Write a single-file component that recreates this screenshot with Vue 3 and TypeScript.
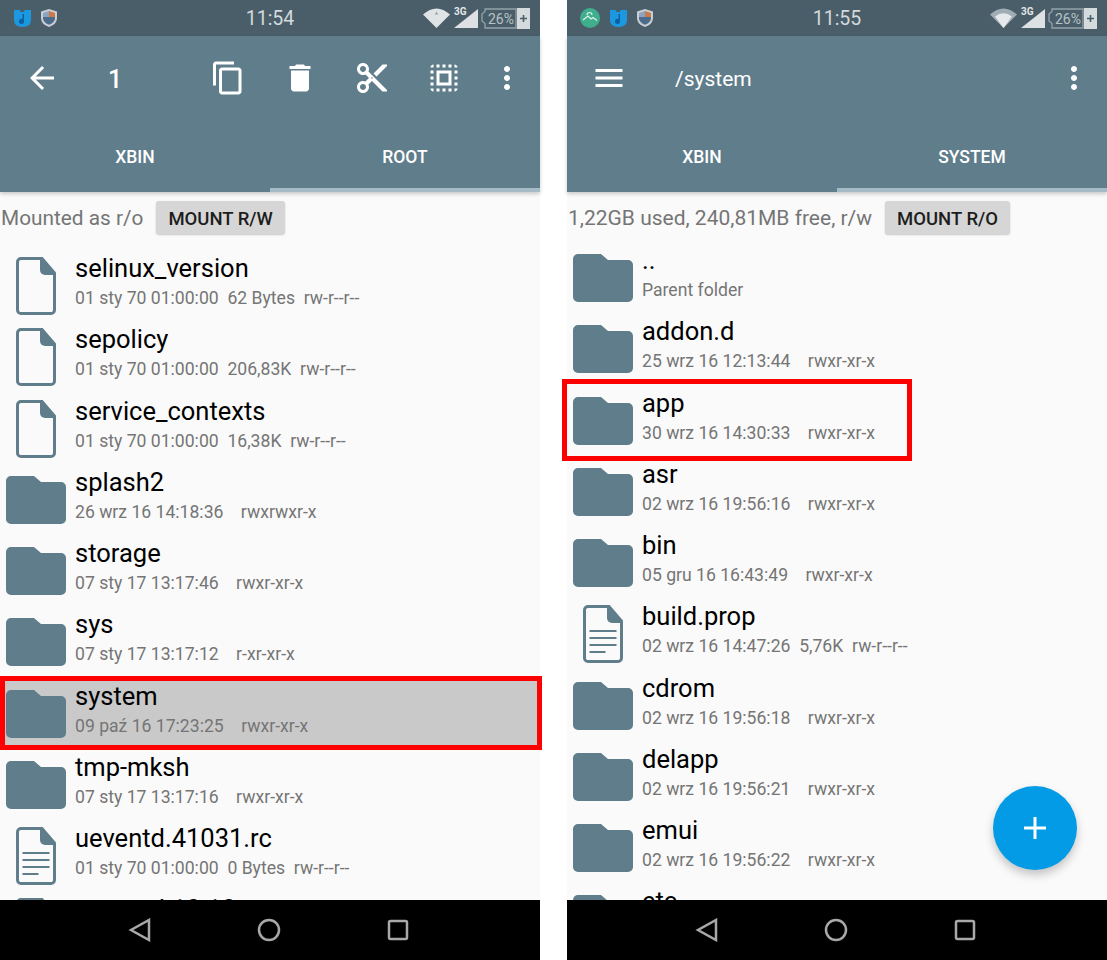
<script setup lang="ts">
type Kind = 'folder' | 'file' | 'text'

interface Entry {
  name: string
  kind: Kind
  meta: string
  selected?: boolean
}

interface Phone {
  id: string
  time: string
  title: string
  navPath: string
  actions: string[]
  tabs: [string, string]
  mountText: string
  mountLabel: string
  hasNotice: boolean
  fullWifi: boolean
  fab: boolean
  entries: Entry[]
}

/* Material icons, all drawn on the 24 unit grid */
const ICON = {
  back: 'M20 11H7.83l5.59-5.59L12 4l-8 8 8 8 1.41-1.41L7.83 13H20v-2z',
  menu: 'M3 18h18v-2H3v2zm0-5h18v-2H3v2zm0-7v2h18V6H3z',
  copy: 'M16 1H4c-1.1 0-2 .9-2 2v14h2V3h12V1zm3 4H8c-1.1 0-2 .9-2 2v14c0 1.1.9 2 2 2h11c1.1 0 2-.9 2-2V7c0-1.1-.9-2-2-2zm0 16H8V7h11v14z',
  trash: 'M6 19c0 1.1.9 2 2 2h8c1.1 0 2-.9 2-2V7H6v12zM19 4h-3.5l-1-1h-5l-1 1H5v2h14V4z',
  cut: 'M9.64 7.64c.23-.5.36-1.05.36-1.64 0-2.21-1.79-4-4-4S2 3.79 2 6s1.79 4 4 4c.59 0 1.14-.13 1.64-.36L10 12l-2.36 2.36C7.14 14.13 6.59 14 6 14c-2.21 0-4 1.79-4 4s1.79 4 4 4 4-1.79 4-4c0-.59-.13-1.14-.36-1.64L12 14l7 7h3v-1L9.64 7.64zM6 8c-1.1 0-2-.89-2-2s.9-2 2-2 2 .89 2 2-.9 2-2 2zm0 12c-1.1 0-2-.89-2-2s.9-2 2-2 2 .89 2 2-.9 2-2 2zm6-7.5c-.28 0-.5-.22-.5-.5s.22-.5.5-.5.5.22.5.5-.22.5-.5.5zM19 3l-6 6 2 2 7-7V3z',
  selectAll: 'M3 5h2V3c-1.1 0-2 .9-2 2zm0 8h2v-2H3v2zm4 8h2v-2H7v2zM3 9h2V7H3v2zm10-6h-2v2h2V3zm6 0v2h2c0-1.1-.9-2-2-2zM5 21v-2H3c0 1.1.9 2 2 2zm-2-4h2v-2H3v2zM9 3H7v2h2V3zm2 18h2v-2h-2v2zm8-8h2v-2h-2v2zm0 8c1.1 0 2-.9 2-2h-2v2zm0-12h2V7h-2v2zm0 8h2v-2h-2v2zm-4 4h2v-2h-2v2zm0-16h2V3h-2v2zM7 17h10V7H7v10zm2-8h6v6H9V9z',
  more: 'M12 8c1.1 0 2-.9 2-2s-.9-2-2-2-2 .9-2 2 .9 2 2 2zm0 2c-1.1 0-2 .9-2 2s.9 2 2 2 2-.9 2-2-.9-2-2-2zm0 6c-1.1 0-2 .9-2 2s.9 2 2 2 2-.9 2-2-.9-2-2-2z',
}

// two spaces either side of the size, folders just have an empty size
function meta(date: string, perm: string, size = '') {
  return `${date}  ${size}  ${perm}`
}

const phones: Phone[] = [
  {
    id: 'left',
    time: '11:54',
    title: '1',
    navPath: ICON.back,
    actions: [ICON.copy, ICON.trash, ICON.cut, ICON.selectAll],
    tabs: ['XBIN', 'ROOT'],
    mountText: 'Mounted as r/o',
    mountLabel: 'MOUNT R/W',
    hasNotice: false,
    fullWifi: false,
    fab: false,
    entries: [
      { name: 'selinux_version', kind: 'file', meta: meta('01 sty 70 01:00:00', 'rw-r--r--', '62 Bytes') },
      { name: 'sepolicy', kind: 'file', meta: meta('01 sty 70 01:00:00', 'rw-r--r--', '206,83K') },
      { name: 'service_contexts', kind: 'file', meta: meta('01 sty 70 01:00:00', 'rw-r--r--', '16,38K') },
      { name: 'splash2', kind: 'folder', meta: meta('26 wrz 16 14:18:36', 'rwxrwxr-x') },
      { name: 'storage', kind: 'folder', meta: meta('07 sty 17 13:17:46', 'rwxr-xr-x') },
      { name: 'sys', kind: 'folder', meta: meta('07 sty 17 13:17:12', 'r-xr-xr-x') },
      { name: 'system', kind: 'folder', meta: meta('09 paź 16 17:23:25', 'rwxr-xr-x'), selected: true },
      { name: 'tmp-mksh', kind: 'folder', meta: meta('07 sty 17 13:17:16', 'rwxr-xr-x') },
      { name: 'ueventd.41031.rc', kind: 'text', meta: meta('01 sty 70 01:00:00', 'rw-r--r--', '0 Bytes') },
      { name: 'ueventd.10.10', kind: 'text', meta: meta('01 sty 70 01:00:00', 'rw-r--r--', '0 Bytes') },
    ],
  },
  {
    id: 'right',
    time: '11:55',
    title: '/system',
    navPath: ICON.menu,
    actions: [],
    tabs: ['XBIN', 'SYSTEM'],
    mountText: '1,22GB used, 240,81MB free, r/w',
    mountLabel: 'MOUNT R/O',
    hasNotice: true,
    fullWifi: true,
    fab: true,
    entries: [
      { name: '..', kind: 'folder', meta: 'Parent folder' },
      { name: 'addon.d', kind: 'folder', meta: meta('25 wrz 16 12:13:44', 'rwxr-xr-x') },
      { name: 'app', kind: 'folder', meta: meta('30 wrz 16 14:30:33', 'rwxr-xr-x') },
      { name: 'asr', kind: 'folder', meta: meta('02 wrz 16 19:56:16', 'rwxr-xr-x') },
      { name: 'bin', kind: 'folder', meta: meta('05 gru 16 16:43:49', 'rwxr-xr-x') },
      { name: 'build.prop', kind: 'text', meta: meta('02 wrz 16 14:47:26', 'rw-r--r--', '5,76K') },
      { name: 'cdrom', kind: 'folder', meta: meta('02 wrz 16 19:56:18', 'rwxr-xr-x') },
      { name: 'delapp', kind: 'folder', meta: meta('02 wrz 16 19:56:21', 'rwxr-xr-x') },
      { name: 'emui', kind: 'folder', meta: meta('02 wrz 16 19:56:22', 'rwxr-xr-x') },
      { name: 'etc', kind: 'folder', meta: meta('02 wrz 16 19:56:22', 'rwxr-xr-x') },
    ],
  },
]
</script>

<template>
  <div class="page">
    <section v-for="phone in phones" :key="phone.id" class="phone" :class="phone.id">
      <div class="status">
        <div class="status-left">
          <svg v-if="phone.hasNotice" class="notice" viewBox="0 0 20 20">
            <circle cx="10" cy="10" r="10" fill="#3fae8c" />
            <path d="M3 12l5-4 3 3 2-1.500 4 3M7 7a2.500 2.500 0 0 1 5 0" fill="none" stroke="#dff3ec" stroke-width="1.200" />
          </svg>
          <svg class="music" viewBox="0 0 17 17">
            <path d="M0 0h6l.5 2H10l.5-2H17v10q0 7-8.500 7T0 10z" fill="#1b98e0" />
            <path d="M8.500 4h1.500v7.500a2.500 2.500 0 1 1-1.500-2.300z" fill="#0d5f9e" />
          </svg>
          <svg class="shield" viewBox="0 0 16 18">
            <path d="M8 0l8 2.500V9c0 4.500-3.500 7.500-8 9-4.500-1.500-8-4.500-8-9V2.500z" fill="#c9ced2" />
            <path d="M8 2l6 2v4H8z" fill="#c9794a" />
            <path d="M8 2L2 4v4h6z" fill="#8ba4c4" />
            <path d="M2 8h12v1c0 3.200-2.700 5.500-6 6.800C4.700 14.500 2 12.200 2 9z" fill="#4d6c8c" />
          </svg>
        </div>
        <span class="time">{{ phone.time }}</span>
        <svg class="status-right" viewBox="0 0 107 24">
          <path d="M0 9.500Q13.500-2.500 27 9.500L13.500 23z" :fill="phone.fullWifi ? '#9fadb5' : '#dfe3e5'" />
          <path v-if="phone.fullWifi" d="M5 11.500Q13.500 5 22 11.500L13.500 23z" fill="#e6e9eb" />
          <path v-else d="M13.500 6.500l1.500 3h-3z" fill="#8d9aa2" />
          <text x="31" y="10" class="net">3G</text>
          <path d="M31 23L55 4v19z" fill="#dde1e3" />
          <path d="M62 4h31v19H62v-4.500l-3-2.500v-7l3-2.500z" fill="none" stroke="#94a2aa" stroke-width="1.300" />
          <text x="65" y="19" class="level">26%</text>
          <rect x="94" y="3" width="13" height="21" fill="#d5dadd" />
          <path d="M97 13.500h7M100.500 10v7" stroke="#4a5e69" stroke-width="1.600" />
        </svg>
      </div>

      <header class="bar">
        <div class="toolbar">
          <svg class="tool" viewBox="0 0 24 24"><path :d="phone.navPath" /></svg>
          <span class="title">{{ phone.title }}</span>
          <div class="actions">
            <svg v-for="path in phone.actions" :key="path" class="tool" viewBox="0 0 24 24"><path :d="path" /></svg>
          </div>
          <svg class="tool more" viewBox="0 0 24 24"><path :d="ICON.more" /></svg>
        </div>
        <div class="tabs">
          <div class="tab active">{{ phone.tabs[0] }}</div>
          <div class="tab">{{ phone.tabs[1] }}</div>
        </div>
      </header>

      <div class="mount">
        <span class="mount-text">{{ phone.mountText }}</span>
        <button type="button" class="mount-btn">{{ phone.mountLabel }}</button>
      </div>

      <div class="list">
        <div v-for="entry in phone.entries" :key="entry.name" class="row" :class="{ selected: entry.selected }">
          <svg v-if="entry.kind === 'folder'" class="folder" viewBox="0 0 60 48">
            <path d="M5 0h23l7 6h20a5 5 0 0 1 5 5v32a5 5 0 0 1-5 5H5a5 5 0 0 1-5-5V5a5 5 0 0 1 5-5z" />
          </svg>
          <svg v-else class="file" viewBox="0 0 40 58">
            <path class="sheet" d="M5 1.500h21L38.500 16v37a3.500 3.500 0 0 1-3.500 3.500H5A3.500 3.500 0 0 1 1.500 53V5A3.500 3.500 0 0 1 5 1.500z" />
            <path class="fold" d="M24 2h2l12 14v2h-9a5 5 0 0 1-5-5z" />
            <path v-if="entry.kind === 'text'" class="lines" d="M6.500 26h27M6.500 33h27M6.500 40h27M6.500 47h16" />
          </svg>
          <div class="info">
            <div class="name">{{ entry.name }}</div>
            <div class="meta">{{ entry.meta }}</div>
          </div>
        </div>
      </div>

      <button v-if="phone.fab" type="button" class="fab">
        <svg viewBox="0 0 22 22"><path d="M11 0v22M0 11h22" /></svg>
      </button>

      <nav class="nav">
        <svg viewBox="0 0 22 24"><path d="M20 2v20L2 12z" /></svg>
        <svg viewBox="0 0 24 24"><circle cx="12" cy="12" r="10" /></svg>
        <svg viewBox="0 0 24 24"><rect x="3" y="3" width="18" height="18" rx="1.500" /></svg>
      </nav>
    </section>

    <div class="mark mark-system"></div>
    <div class="mark mark-app"></div>
  </div>
</template>

<style scoped>
.page {
  position: relative;
  display: flex;
  gap: 27px;
  width: 1107px;
  height: 960px;
  overflow: hidden;
  background: #fff;
  font-family: Roboto, "Liberation Sans", sans-serif;
}

.phone {
  position: relative;
  display: flex;
  flex-direction: column;
  width: 540px;
  height: 960px;
  background: #fafafa;
}

/* ── Status bar ───────────────────────────────────────────────────── */
.status {
  display: grid;
  grid-template-columns: 1fr auto 1fr;
  align-items: center;
  flex: none;
  height: 36px;
  background: #4a5e69;
}

.status-left {
  display: flex;
  align-items: center;
  gap: 10px;
  padding-left: 14px;
}

.notice {
  width: 20px;
  height: 20px;
  margin-left: -1px;
}

.music {
  width: 17px;
  height: 17px;
}

.shield {
  width: 16px;
  height: 18px;
}

.time {
  color: #d3d9dc;
  font-size: 19.5px;
}

.status-right {
  justify-self: end;
  width: 107px;
  height: 24px;
  margin-top: -3px;
  margin-right: 10px;
}

.net {
  fill: #e3e6e8;
  font-size: 10px;
  font-weight: 700;
}

.level {
  fill: #b7c2c8;
  font-size: 14px;
}

/* ── Toolbar and tabs ─────────────────────────────────────────────── */
.bar {
  z-index: 1;
  flex: none;
  background: #607d8b;
  box-shadow: 0 2px 4px rgba(0, 0, 0, 0.2);
  color: #fff;
}

.toolbar {
  display: flex;
  align-items: center;
  height: 84px;
  padding: 0 15px 0 24px;
}

.tool {
  flex: none;
  width: 36px;
  height: 36px;
  fill: #fff;
}

.title {
  margin-left: 48px;
  padding-top: 2px;
  font-size: 21px;
}

.left .title {
  font-size: 25px;
  font-weight: 500;
}

.actions {
  display: flex;
  gap: 36px;
  margin-left: auto;
}

.more {
  margin-left: 27px;
}

.tabs {
  display: flex;
  height: 72px;
}

.tab {
  display: flex;
  flex: 1;
  align-items: center;
  justify-content: center;
  padding-top: 2px;
  box-shadow: inset 0 -4px 0 #a5bbc6;
  font-size: 17.5px;
  font-weight: 500;
}

.tab.active {
  box-shadow: none;
}

/* ── Mount line ───────────────────────────────────────────────────── */
.mount {
  display: flex;
  align-items: center;
  flex: none;
  gap: 13px;
  box-sizing: border-box;
  height: 53px;
  padding: 0 0 2px 1px;
}

.mount-text {
  color: #757575;
  font-size: 21px;
}

.left .mount-text {
  font-size: 20.8px;
}

.mount-btn {
  height: 33px;
  padding: 2px 12px 0;
  background: #d6d6d6;
  border: none;
  border-radius: 3px;
  box-shadow: 0 1px 2px rgba(0, 0, 0, 0.2);
  color: #1d1d1d;
  font-family: inherit;
  font-size: 18.5px;
  font-weight: 500;
}

/* ── File list ────────────────────────────────────────────────────── */
.list {
  display: flex;
  flex: 1;
  flex-direction: column;
  gap: 4.25px;
  min-height: 0;
  overflow: hidden;
}

.left .list {
  padding-top: 8px;
}

.row {
  position: relative;
  flex: none;
  height: 67px;
  padding-left: 75px;
}

.row.selected {
  background: #c9c9c9;
}

.folder {
  position: absolute;
  top: 9px;
  left: 6px;
  width: 60px;
  height: 48px;
  fill: #607d8b;
}

.file {
  position: absolute;
  top: 4px;
  left: 16px;
  width: 40px;
  height: 58px;
}

.sheet {
  fill: none;
  stroke: #607d8b;
  stroke-width: 3;
}

.fold {
  fill: #607d8b;
}

.lines {
  stroke: #607d8b;
  stroke-width: 2;
}

.name {
  color: #000;
  font-size: 25.5px;
  line-height: 30px;
  white-space: nowrap;
}

.meta {
  color: #757575;
  font-size: 17.6px;
  line-height: 30px;
  white-space: pre;
}

/* ── Floating button, navigation bar, red marks ───────────────────── */
.fab {
  position: absolute;
  right: 30px;
  bottom: 90px;
  display: flex;
  align-items: center;
  justify-content: center;
  width: 84px;
  height: 84px;
  padding: 0;
  background: #039be5;
  border: none;
  border-radius: 50%;
  box-shadow: 0 5px 10px rgba(0, 0, 0, 0.22);
}

.fab svg {
  width: 22px;
  height: 22px;
  fill: none;
  stroke: #fff;
  stroke-width: 3;
}

.nav {
  position: relative;
  z-index: 2;
  display: flex;
  align-items: center;
  justify-content: center;
  flex: none;
  gap: 105px;
  height: 60px;
  padding-right: 2px;
  background: #000;
}

.nav svg {
  width: 24px;
  height: 24px;
  fill: none;
  stroke: #a8a8a8;
  stroke-width: 2.5;
}

.mark {
  position: absolute;
  z-index: 3;
  box-sizing: border-box;
  border: 5px solid #f00;
}

.mark-system {
  top: 676px;
  left: 0;
  width: 542px;
  height: 74px;
}

.mark-app {
  top: 379px;
  left: 562px;
  width: 350px;
  height: 82px;
}
</style>
